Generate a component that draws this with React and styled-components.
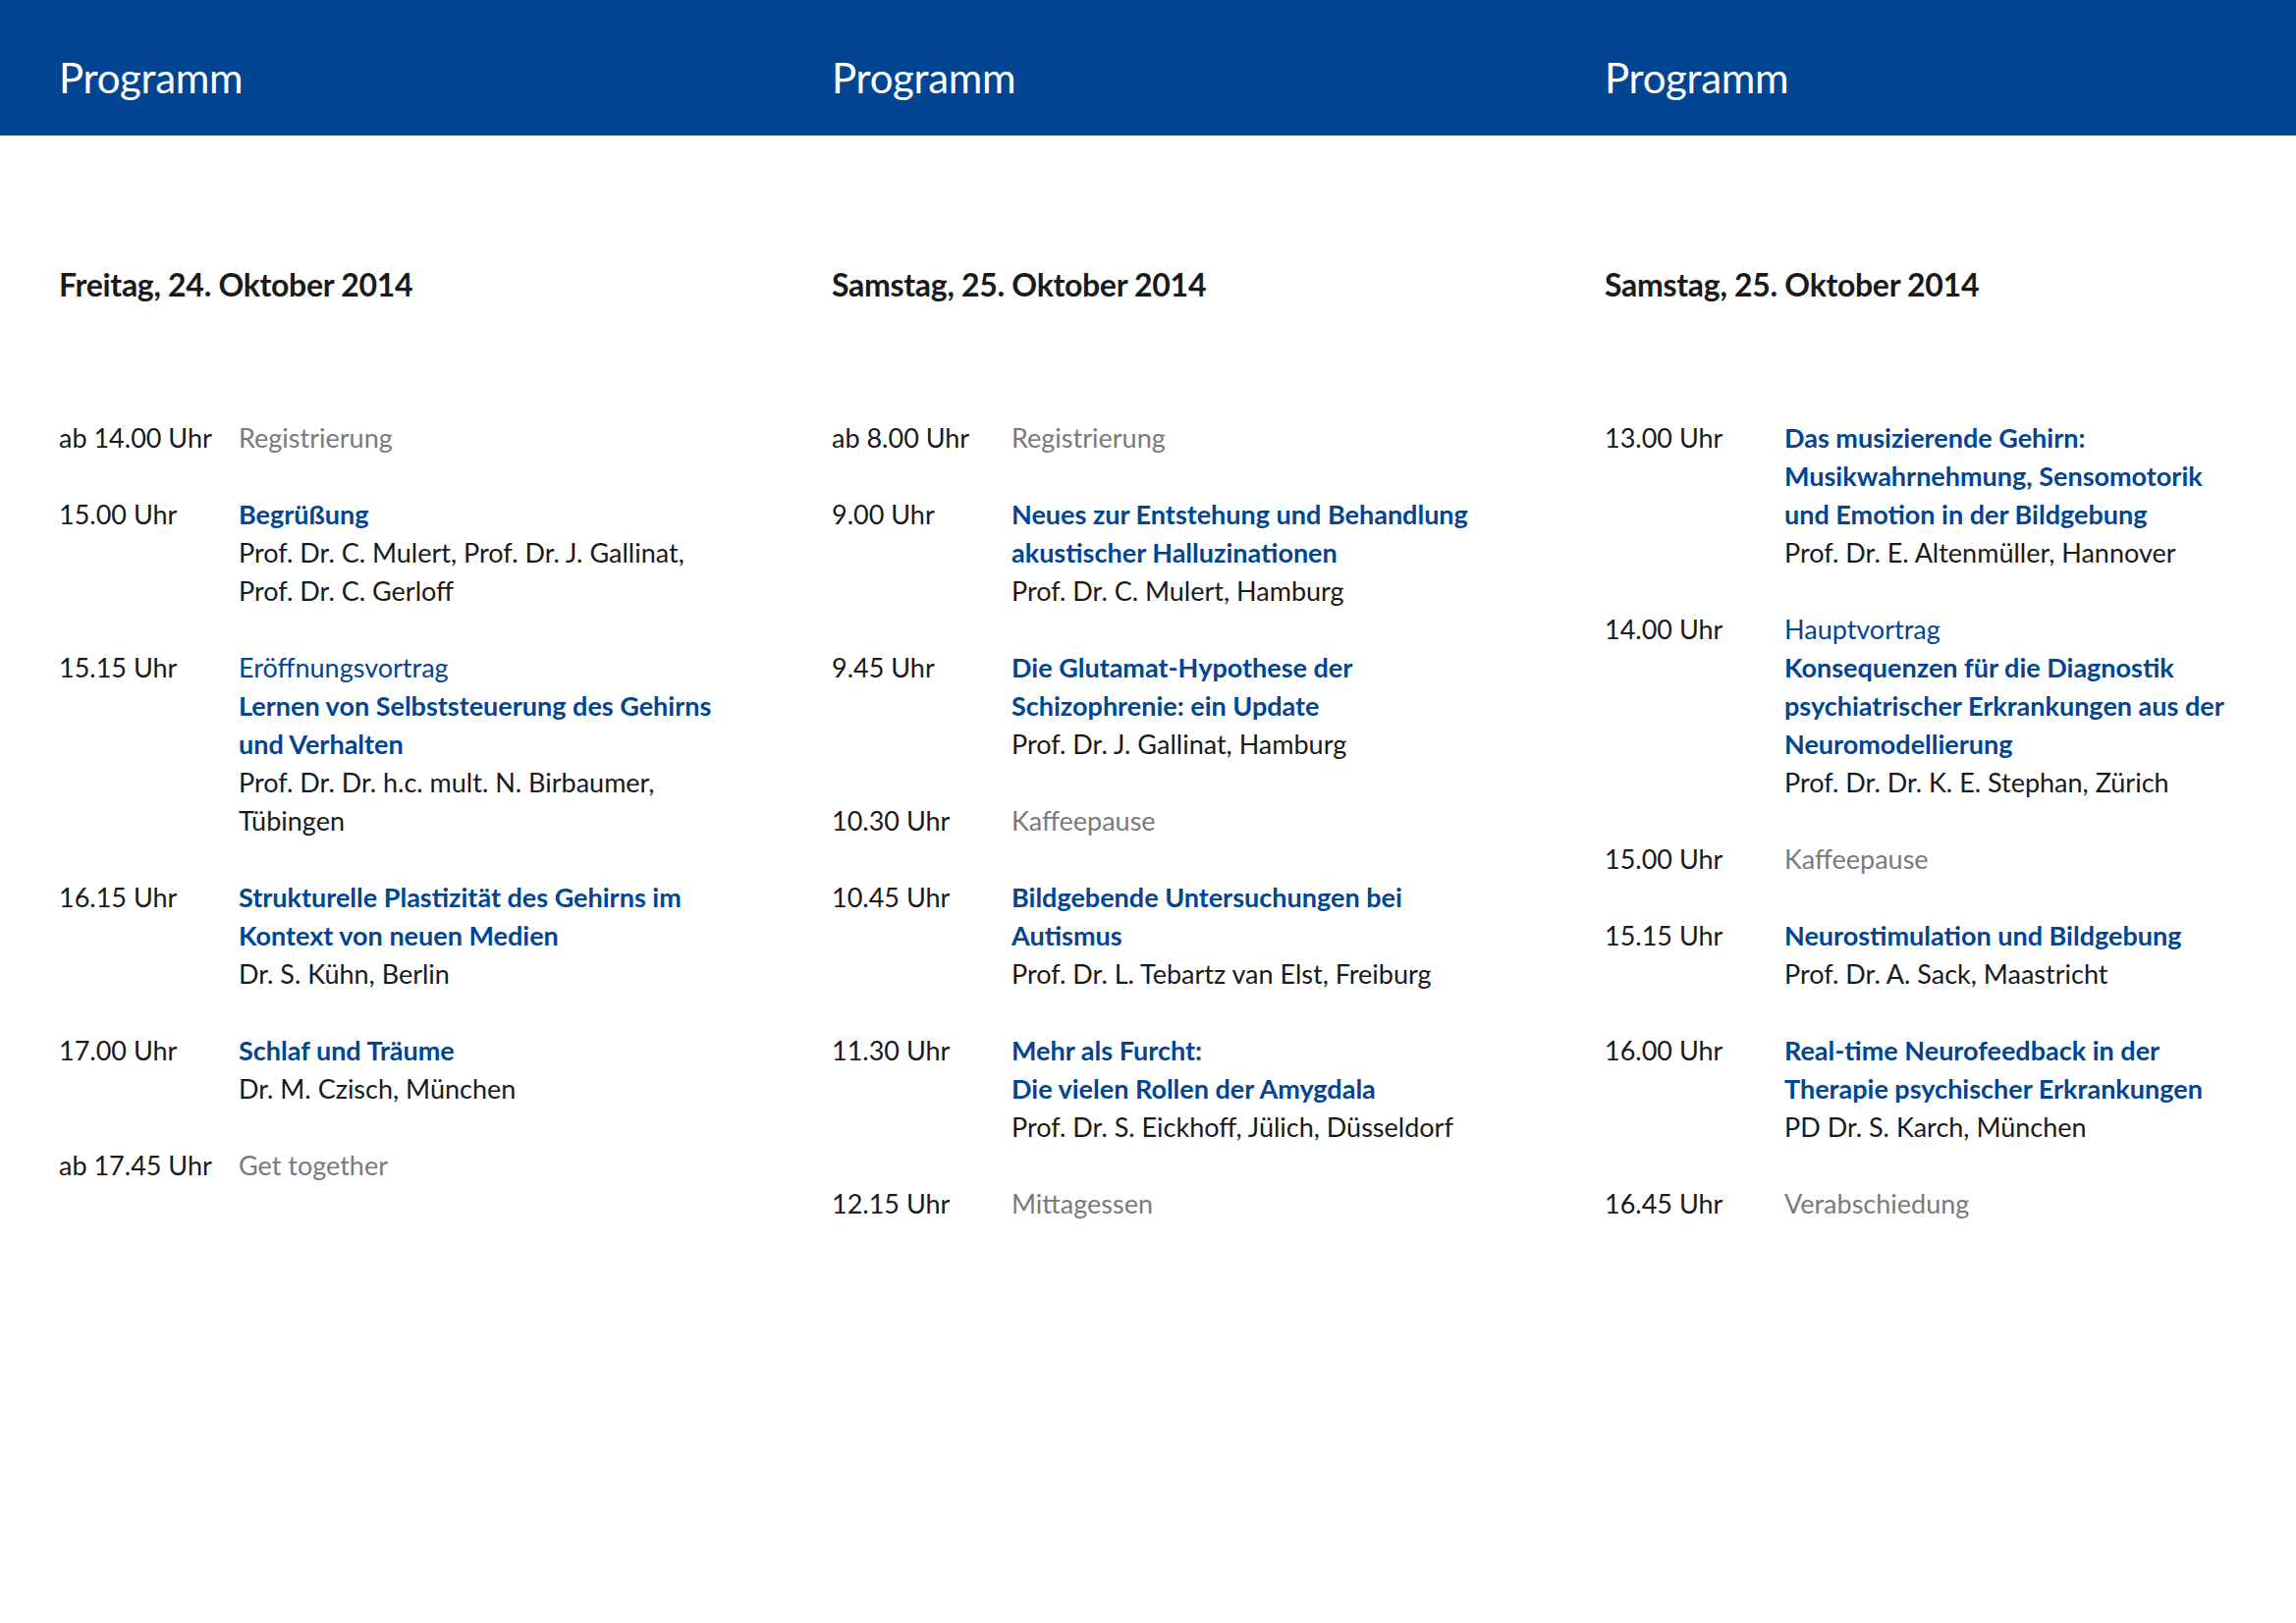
import React from "react";
import styled, { createGlobalStyle } from "styled-components";

const Global = createGlobalStyle`
  html, body { margin: 0; padding: 0; background: #fff; }
  body { font-family: Lato, "Open Sans", sans-serif; color: #1a1a1a; }
`;

const Page = styled.div`
  width: 2338px;
  height: 1653px;
  background: #fff;
`;
const Header = styled.header`
  height: 138px;
  background: #014593;
  display: grid;
  grid-template-columns: repeat(3, 787px);
  padding-left: 60px;
  align-items: center;
`;
const HeaderTitle = styled.h1`
  margin: 0;
  color: #fff;
  font-weight: 400;
  font-size: 42px;
  letter-spacing: -0.3px;
  padding-top: 20px;
`;
const Columns = styled.div`
  display: grid;
  grid-template-columns: repeat(3, 787px);
  padding-left: 60px;
  padding-top: 248px;
`;
const Column = styled.section`
  display: flex;
  flex-direction: column;
`;
const DateHeading = styled.h2`
  margin: -116px 0 116px;
  font-size: 32px;
  font-weight: 700;
  line-height: 40px;
  color: #1a1a1a;
  letter-spacing: -0.3px;
`;
const Entry = styled.div`
  display: grid;
  grid-template-columns: 183px 1fr;
  font-size: 27px;
  line-height: 39px;
  margin-bottom: 39px;
  white-space: nowrap;
`;
const Time = styled.div`
  color: #1a1a1a;
`;
const Body = styled.div`
  display: flex;
  flex-direction: column;
`;
const Line = styled.span`
  color: ${(p) => (p.$kind === "title" || p.$kind === "blue" ? "#014593" : p.$kind === "grey" ? "#7a7a7a" : "#1a1a1a")};
  font-weight: ${(p) => (p.$kind === "title" ? 700 : 400)};
`;

const data = [
  {
    date: "Freitag, 24. Oktober 2014",
    items: [
      ["ab 14.00 Uhr", [["grey", "Registrierung"]]],
      ["15.00 Uhr", [["title", "Begrüßung"], ["", "Prof. Dr. C. Mulert, Prof. Dr. J. Gallinat,"], ["", "Prof. Dr. C. Gerloff"]]],
      ["15.15 Uhr", [["blue", "Eröffnungsvortrag"], ["title", "Lernen von Selbststeuerung des Gehirns"], ["title", "und Verhalten"], ["", "Prof. Dr. Dr. h.c. mult. N. Birbaumer,"], ["", "Tübingen"]]],
      ["16.15 Uhr", [["title", "Strukturelle Plastizität des Gehirns im"], ["title", "Kontext von neuen Medien"], ["", "Dr. S. Kühn, Berlin"]]],
      ["17.00 Uhr", [["title", "Schlaf und Träume"], ["", "Dr. M. Czisch, München"]]],
      ["ab 17.45 Uhr", [["grey", "Get together"]]],
    ],
  },
  {
    date: "Samstag, 25. Oktober 2014",
    items: [
      ["ab 8.00 Uhr", [["grey", "Registrierung"]]],
      ["9.00 Uhr", [["title", "Neues zur Entstehung und Behandlung"], ["title", "akustischer Halluzinationen"], ["", "Prof. Dr. C. Mulert, Hamburg"]]],
      ["9.45 Uhr", [["title", "Die Glutamat-Hypothese der"], ["title", "Schizophrenie: ein Update"], ["", "Prof. Dr. J. Gallinat, Hamburg"]]],
      ["10.30 Uhr", [["grey", "Kaffeepause"]]],
      ["10.45 Uhr", [["title", "Bildgebende Untersuchungen bei"], ["title", "Autismus"], ["", "Prof. Dr. L. Tebartz van Elst, Freiburg"]]],
      ["11.30 Uhr", [["title", "Mehr als Furcht:"], ["title", "Die vielen Rollen der Amygdala"], ["", "Prof. Dr. S. Eickhoff, Jülich, Düsseldorf"]]],
      ["12.15 Uhr", [["grey", "Mittagessen"]]],
    ],
  },
  {
    date: "Samstag, 25. Oktober 2014",
    items: [
      ["13.00 Uhr", [["title", "Das musizierende Gehirn:"], ["title", "Musikwahrnehmung, Sensomotorik"], ["title", "und Emotion in der Bildgebung"], ["", "Prof. Dr. E. Altenmüller, Hannover"]]],
      ["14.00 Uhr", [["blue", "Hauptvortrag"], ["title", "Konsequenzen für die Diagnostik"], ["title", "psychiatrischer Erkrankungen aus der"], ["title", "Neuromodellierung"], ["", "Prof. Dr. Dr. K. E. Stephan, Zürich"]]],
      ["15.00 Uhr", [["grey", "Kaffeepause"]]],
      ["15.15 Uhr", [["title", "Neurostimulation und Bildgebung"], ["", "Prof. Dr. A. Sack, Maastricht"]]],
      ["16.00 Uhr", [["title", "Real-time Neurofeedback in der"], ["title", "Therapie psychischer Erkrankungen"], ["", "PD Dr. S. Karch, München"]]],
      ["16.45 Uhr", [["grey", "Verabschiedung"]]],
    ],
  },
];

export default function App() {
  return (
    <Page>
      <Global />
      <Header>
        {data.map((_, i) => (
          <HeaderTitle key={i}>Programm</HeaderTitle>
        ))}
      </Header>
      <Columns>
        {data.map((col, i) => (
          <Column key={i}>
            <DateHeading>{col.date}</DateHeading>
            {col.items.map(([t, lines], j) => (
              <Entry key={j}>
                <Time>{t}</Time>
                <Body>
                  {lines.map(([k, txt], n) => (
                    <Line key={n} $kind={k}>{txt}</Line>
                  ))}
                </Body>
              </Entry>
            ))}
          </Column>
        ))}
      </Columns>
    </Page>
  );
}
